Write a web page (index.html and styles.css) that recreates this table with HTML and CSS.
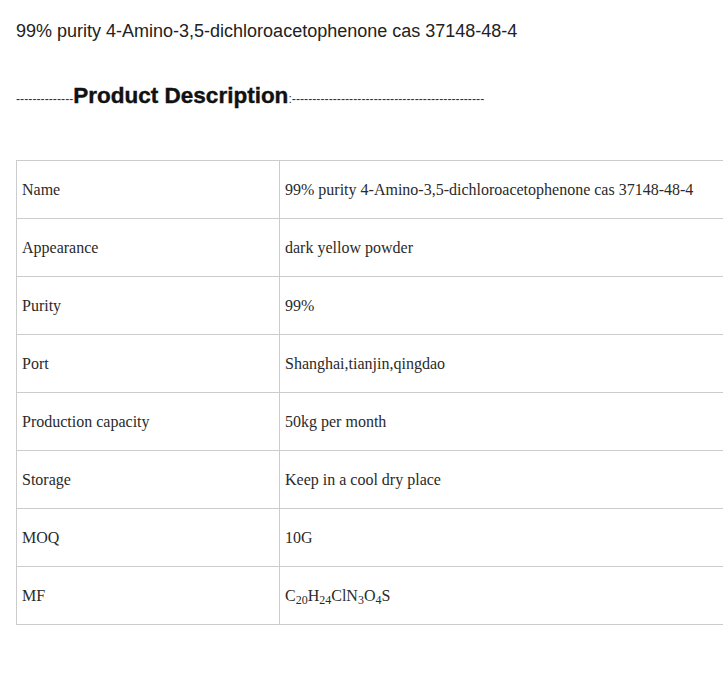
FILE: index.html
```html
<!DOCTYPE html>
<html>
<head>
<meta charset="utf-8">
<link rel="stylesheet" href="styles.css">
</head>
<body>
<div class="page">
  <h1 class="title">99% purity 4-Amino-3,5-dichloroacetophenone cas 37148-48-4</h1>
  <h2 class="section"><span class="dash">--------------</span>Product Description<span class="dash">:-----------------------------------------------</span></h2>
  <table class="spec">
    <tr><td class="k">Name</td><td>99% purity 4-Amino-3,5-dichloroacetophenone cas 37148-48-4</td></tr>
    <tr><td class="k">Appearance</td><td>dark yellow powder</td></tr>
    <tr><td class="k">Purity</td><td>99%</td></tr>
    <tr><td class="k">Port</td><td>Shanghai,tianjin,qingdao</td></tr>
    <tr><td class="k">Production capacity</td><td>50kg per month</td></tr>
    <tr><td class="k">Storage</td><td>Keep in a cool dry place</td></tr>
    <tr><td class="k">MOQ</td><td>10G</td></tr>
    <tr><td class="k">MF</td><td>C<sub>20</sub>H<sub>24</sub>ClN<sub>3</sub>O<sub>4</sub>S</td></tr>
  </table>
</div>
</body>
</html>
```
FILE: styles.css
```css
html, body { margin: 0; padding: 0; overflow: hidden; background: #fff; }
.page { padding: 0 0 0 16px; color: #222; }
.title { font-family: "Liberation Sans", Arial, sans-serif; font-weight: normal; font-size: 18px; margin: 0; padding-top: 20px; line-height: 22px; color: #222; }
.section { font-family: "Liberation Sans", Arial, sans-serif; font-weight: bold; font-size: 22.5px; margin: 0; padding-top: 40px; line-height: 28px; color: #111; -webkit-text-stroke: 0.4px #111; }
.dash { font-size: 12.3px; font-weight: normal; letter-spacing: 0; color: #333; -webkit-text-stroke: 0; }
.spec { border-collapse: collapse; margin-top: 47px; width: 780px; font-family: "Liberation Serif", "Times New Roman", serif; font-size: 16px; color: #2a2a2a; }
.spec td { border: 1px solid #ccc; height: 57px; padding: 0 5px; vertical-align: middle; }
.spec td.k { width: 252px; }
.spec sub { font-size: 12px; vertical-align: -3px; line-height: 0; }
```
